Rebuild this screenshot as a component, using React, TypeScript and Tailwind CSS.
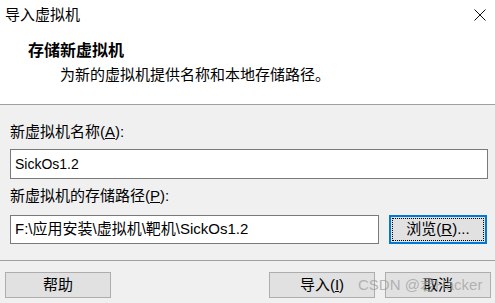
import React from 'react';

const font = "font-['Liberation_Sans','Noto_Sans_CJK_SC',sans-serif]";

function Btn({ children, className = '' }: { children: React.ReactNode; className?: string }) {
  return (
    <div
      className={`h-[26px] w-[106px] flex items-center justify-center bg-[#e1e1e1] border border-[#adadad] text-[15px] text-black ${className}`}
    >
      {children}
    </div>
  );
}

export default function App() {
  return (
    <div className={`relative w-[495px] h-[303px] bg-[#f0f0f0] overflow-hidden ${font} text-black`}>
      {/* header */}
      <div className="h-[104px] bg-white">
        <div className="h-[29px] flex items-center justify-between pl-[5px] pr-[9px]">
          <span className="text-[15px] leading-[20px]">导入虚拟机</span>
          <svg width="12" height="12" viewBox="0 0 12 12" className="mt-[1px]">
            <path d="M0.5 0.5 L11.5 11.5 M11.5 0.5 L0.5 11.5" stroke="#111" strokeWidth="1" fill="none" />
          </svg>
        </div>
        <div className="pl-[28px] pt-[12px] text-[16px] leading-[20px] font-bold">存储新虚拟机</div>
        <div className="pl-[60px] pt-[4px] text-[15px] leading-[20px]">为新的虚拟机提供名称和本地存储路径。</div>
      </div>
      <div className="h-px bg-[#a0a0a0]" />

      {/* body */}
      <div className="pl-[10px] pr-[7px] pt-[17px]">
        <div className="text-[15px] leading-[20px]">
          新虚拟机名称(<span className="underline">A</span>):
        </div>
        <div className="mt-[7px] h-[30px] bg-white border border-[#7a7a7a] flex items-center pl-[4px] text-[14px]">
          SickOs1.2
        </div>
        <div className="mt-[7px] text-[15px] leading-[20px]">
          新虚拟机的存储路径(<span className="underline">P</span>):
        </div>
        <div className="mt-[9px] flex gap-[10px]">
          <div className="w-[369px] h-[29px] bg-white border border-[#7a7a7a] flex items-center pl-[4px] text-[15px]">
            F:\应用安装\虚拟机\靶机\SickOs1.2
          </div>
          <div className="w-[98px] h-[29px] bg-[#e1e1e1] border-2 border-[#0078d7] p-[1px]">
            <div className="h-full border border-dotted border-black flex items-center justify-center text-[15px]">
              浏览(<span className="underline">R</span>)...
            </div>
          </div>
        </div>
      </div>

      <div className="mt-[16px] h-px bg-[#a0a0a0]" />

      {/* footer */}
      <div className="flex pt-[11px] pl-[5px] pr-[4px]">
        <Btn>帮助</Btn>
        <div className="flex-1" />
        <Btn>
          导入(<span className="underline">I</span>)
        </Btn>
        <Btn className="ml-[10px]">取消</Btn>
      </div>

      {/* watermark */}
      <div className="absolute left-[358px] top-[276px] text-[15px] leading-[18px] text-[#9a9a9a]/70 whitespace-nowrap">
        CSDN @君Hacker
      </div>
    </div>
  );
}
